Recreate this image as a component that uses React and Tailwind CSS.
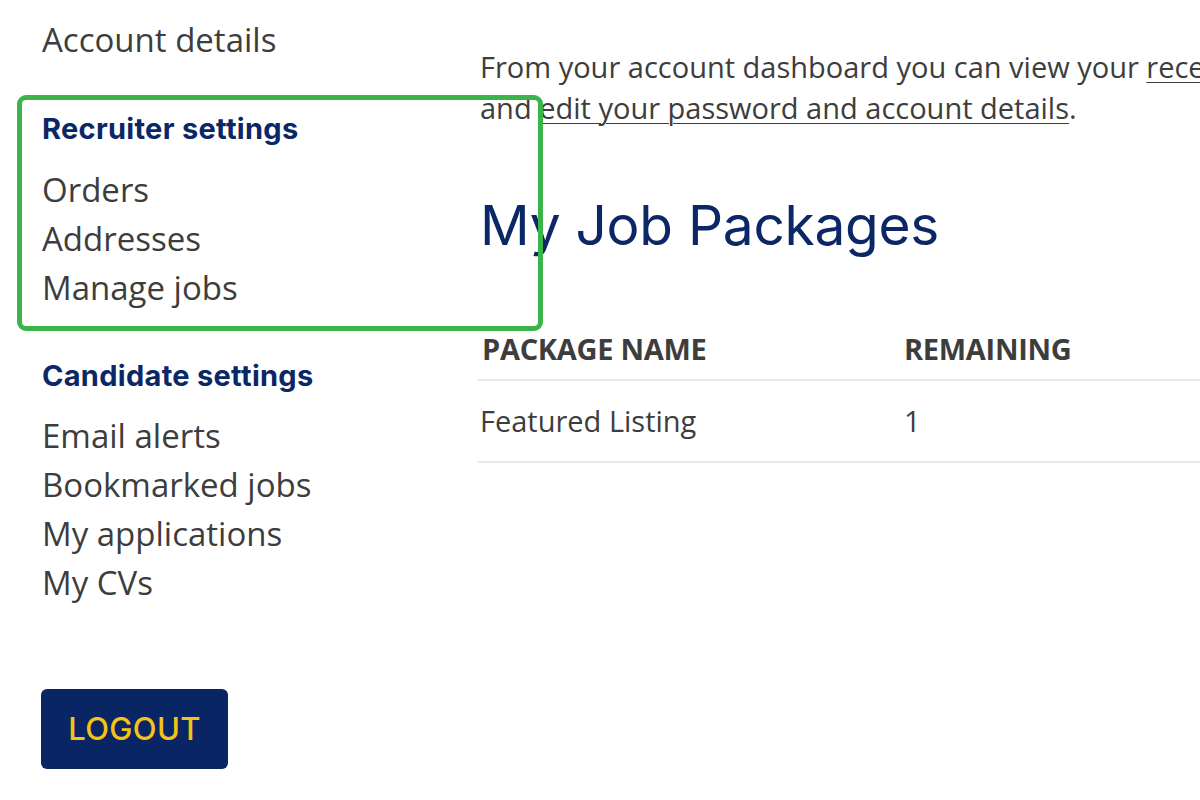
import React from "react";

const body = { fontFamily: '"Open Sans", "Noto Sans", sans-serif' };
const head = { fontFamily: 'Inter, "Noto Sans", sans-serif' };

function NavItem({ children }) {
  return <div className="text-[33px] leading-[49px] text-[#3d3d3d]">{children}</div>;
}

function NavHeading({ children, className }) {
  return (
    <div style={head} className={"text-[29px] leading-[40px] font-bold tracking-[0.01em] text-[#0b2766] " + className}>
      {children}
    </div>
  );
}

export default function App() {
  return (
    <div style={body} className="relative w-[1200px] h-[800px] overflow-hidden bg-white flex">
      <aside className="w-[480px] shrink-0 pl-[42px] pt-[15px]">
        <NavItem>Account details</NavItem>
        <NavHeading className="mt-[45px] mb-[16px]">Recruiter settings</NavHeading>
        <NavItem>Orders</NavItem>
        <NavItem>Addresses</NavItem>
        <NavItem>Manage jobs</NavItem>
        <NavHeading className="mt-[44px] mb-[15px]">Candidate settings</NavHeading>
        <NavItem>Email alerts</NavItem>
        <NavItem>Bookmarked jobs</NavItem>
        <NavItem>My applications</NavItem>
        <NavItem>My CVs</NavItem>
        <button
          style={head}
          className="mt-[82px] -ml-[1px] w-[187px] h-[80px] rounded-[6px] bg-[#0a2563] text-[#f3c316] text-[31px] font-medium tracking-[0.01em]"
        >
          LOGOUT
        </button>
      </aside>

      <main className="flex-1 min-w-0 pt-[46px]">
        <p className="text-[29px] leading-[41px] text-[#3d3d3d] whitespace-nowrap">
          From your account dashboard you can view your <span className="underline underline-offset-4 decoration-1">recent orders</span>, manage your shipping and billing addresses,
          <br />
          and <span className="underline underline-offset-4 decoration-1">edit your password and account details</span>.
        </p>

        <h1 style={head} className="mt-[62px] text-[55px] leading-[70px] font-normal tracking-[-0.005em] text-[#0b2766]">
          My Job Packages
        </h1>

        <table className="mt-[59px] w-[760px] -ml-[2px] text-[#3d3d3d] text-left border-collapse">
          <thead>
            <tr className="border-b-2 border-[#e8e8e8]">
              <th className="w-[426px] pl-[4px] pt-[15px] pb-[15px] text-[29px] leading-[30px] font-bold uppercase tracking-[-0.01em]">Package name</th>
              <th className="pt-[15px] pb-[15px] text-[29px] leading-[30px] font-bold uppercase tracking-[-0.01em]">Remaining</th>
            </tr>
          </thead>
          <tbody>
            <tr className="border-b-2 border-[#e8e8e8]">
              <td className="pl-[2px] h-[82px] text-[29px]">Featured Listing</td>
              <td className="h-[82px] text-[29px]">1</td>
            </tr>
          </tbody>
        </table>
      </main>

      <div className="absolute left-[17px] top-[95px] w-[526px] h-[236px] border-[5px] border-[#3bb54a] rounded-[9px] pointer-events-none" />
    </div>
  );
}
